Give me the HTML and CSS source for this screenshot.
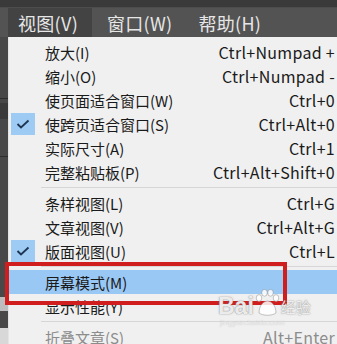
FILE: index.html
```html
<!DOCTYPE html>
<html lang="zh-CN">
<head>
    <meta charset="UTF-8">
    <title>视图菜单</title>
    <link rel="stylesheet" href="styles.css">
</head>
<body>
    <div class="topstrip"></div>
    <div class="menubar">
        <div class="menubar-item active">视图(V)</div>
        <div class="menubar-item">窗口(W)</div>
        <div class="menubar-item">帮助(H)</div>
    </div>
    <div class="main">
        <div class="side">
            <div class="side-line l1"></div>
            <div class="side-block b1"></div>
            <div class="side-line l2"></div>
            <div class="side-block b2"></div>
            <div class="side-block b3"></div>
        </div>
        <div class="dropdown">
            <div class="row"><span class="check"></span><span class="label">放大(I)</span><span class="key">Ctrl+Numpad +</span></div>
            <div class="row"><span class="check"></span><span class="label">缩小(O)</span><span class="key">Ctrl+Numpad -</span></div>
            <div class="row"><span class="check"></span><span class="label">使页面适合窗口(W)</span><span class="key">Ctrl+0</span></div>
            <div class="row"><span class="check on"><svg width="14" height="10" viewBox="0 0 14 10"><path d="M1.5 5 L5 8.5 L12.5 1.5" fill="none" stroke="#1d3550" stroke-width="1.8"/></svg></span><span class="label">使跨页适合窗口(S)</span><span class="key">Ctrl+Alt+0</span></div>
            <div class="row"><span class="check"></span><span class="label">实际尺寸(A)</span><span class="key">Ctrl+1</span></div>
            <div class="row"><span class="check"></span><span class="label">完整粘贴板(P)</span><span class="key">Ctrl+Alt+Shift+0</span></div>
            <div class="sep"></div>
            <div class="row"><span class="check"></span><span class="label">条样视图(L)</span><span class="key">Ctrl+G</span></div>
            <div class="row"><span class="check"></span><span class="label">文章视图(V)</span><span class="key">Ctrl+Alt+G</span></div>
            <div class="row"><span class="check on"><svg width="14" height="10" viewBox="0 0 14 10"><path d="M1.5 5 L5 8.5 L12.5 1.5" fill="none" stroke="#1d3550" stroke-width="1.8"/></svg></span><span class="label">版面视图(U)</span><span class="key">Ctrl+L</span></div>
            <div class="sep"></div>
            <div class="row hover"><span class="check"></span><span class="label">屏幕模式(M)</span><span class="key"></span></div>
            <div class="row"><span class="check"></span><span class="label">显示性能(Y)</span><span class="key"></span></div>
            <div class="sep"></div>
            <div class="row disabled"><span class="check"></span><span class="label">折叠文章(S)</span><span class="key">Alt+Enter</span></div>
        </div>
    </div>

    <div class="redbox"></div>
    <div class="watermark">
        <div class="wm-main">
            <span class="wm-bai">Bai</span>
            <svg class="wm-paw" width="26" height="28" viewBox="0 0 26 28">
                <ellipse cx="5" cy="9" rx="2.8" ry="3.4"/>
                <ellipse cx="10.5" cy="3.8" rx="2.8" ry="3.4"/>
                <ellipse cx="16.5" cy="3.8" rx="2.8" ry="3.4"/>
                <ellipse cx="22" cy="9" rx="2.8" ry="3.4"/>
                <path d="M5 24 C5 16 10 12 13.5 12 C17 12 22 16 22 24 C18 27 9 27 5 24 Z"/>
            </svg>
            <span class="wm-jy">经验</span>
        </div>
        <div class="wm-url">jingyan.baidu.com</div>
    </div>
</body>
</html>
```

FILE: styles.css
```css
body {
    margin: 0;
    width: 337px;
    height: 344px;
    overflow: hidden;
    background-color: #454545;
    font-family: "Noto Sans CJK SC", "Noto Sans", sans-serif;
    position: relative;
}
.topstrip {
    height: 7px;
    background-color: #3a3a3a;
    border-bottom: 1px solid #4c4c4c;
}
.menubar {
    height: 29px;
    background-color: #535353;
    display: flex;
    padding-left: 8px;
}
.menubar-item {
    color: #e6e6e6;
    font-size: 18px;
    line-height: 27px;
    padding: 2px 10px 0 10px;
    margin-right: 6px;
    letter-spacing: 0.3px;
}
.menubar-item.active {
    background-color: #434343;
    width: 64px;
    margin-right: 5px;
}
.main {
    display: flex;
}
.side {
    width: 8px;
    flex: none;
    height: 307px;
    background-color: #484848;
    position: relative;
}
.side-line {
    position: absolute;
    left: 0;
    width: 8px;
    height: 1px;
    background-color: #2e2e2e;
}
.l1 { top: 61px; }
.l2 { top: 119px; }
.side-block {
    position: absolute;
    left: 0;
    width: 8px;
}
.b1 { top: 66px; height: 16px; background-color: #3b3b3b; }
.b2 { top: 260px; height: 14px; background-color: #bdbdbd; }
.b3 { top: 291px; height: 16px; background-color: #d8d8d8; }
.dropdown {
    flex: 1;
    min-width: 0;
    background-color: #f0f0f0;
    padding-top: 3px;
    border-left: 1px solid #e4e4e4;
    box-sizing: border-box;
}
.row {
    display: flex;
    align-items: center;
    height: 24px;
    font-size: 15px;
    color: #1a1a1a;
}
.check {
    width: 24px;
    height: 22px;
    margin-left: 2px;
    margin-right: 10px;
    flex: none;
    display: flex;
    align-items: center;
    justify-content: center;
}
.check.on {
    background-color: #9ecbf3;
}
.label {
    flex: 1;
    white-space: nowrap;
}
.key {
    padding-right: 2px;
    white-space: nowrap;
    text-align: right;
    font-size: 16px;
    letter-spacing: 0.3px;
}
.row.hover {
    background-color: #99c8f4;
}
.row.disabled {
    color: #8c8c8c;
}
.sep {
    height: 7px;
    margin-left: 32px;
    position: relative;
}
.sep::after {
    content: "";
    position: absolute;
    left: 0;
    right: 0;
    top: 3px;
    height: 1px;
    background-color: #d6d6d6;
}
.redbox {
    position: absolute;
    left: 5px;
    top: 262px;
    width: 274px;
    height: 35px;
    border: 4px solid #d01e1e;
}
.watermark {
    position: absolute;
    left: 218px;
    top: 288px;
    width: 100px;
    color: rgba(255, 255, 255, 0.85);
}
.wm-main {
    display: flex;
    align-items: flex-end;
    height: 30px;
}
.wm-bai {
    font-family: "Liberation Sans", sans-serif;
    font-weight: bold;
    font-size: 23px;
    line-height: 24px;
    text-shadow: 0 0 1px rgba(110, 110, 110, 0.8), 0 0 2px rgba(140, 140, 140, 0.5);
}
.wm-paw {
    fill: rgba(255, 255, 255, 0.85);
    stroke: rgba(130, 130, 130, 0.6);
    stroke-width: 0.8;
    margin-bottom: 1px;
    flex: none;
}
.wm-jy {
    font-size: 15px;
    line-height: 22px;
    margin-left: 1px;
    white-space: nowrap;
    text-shadow: 0 0 1px rgba(110, 110, 110, 0.8), 0 0 2px rgba(140, 140, 140, 0.5);
}
.wm-url {
    font-family: "Liberation Sans", sans-serif;
    font-size: 8px;
    line-height: 10px;
    padding-left: 2px;
    color: rgba(255, 255, 255, 0.6);
    text-shadow: 0 0 1px rgba(140, 140, 140, 0.5);
}
```
